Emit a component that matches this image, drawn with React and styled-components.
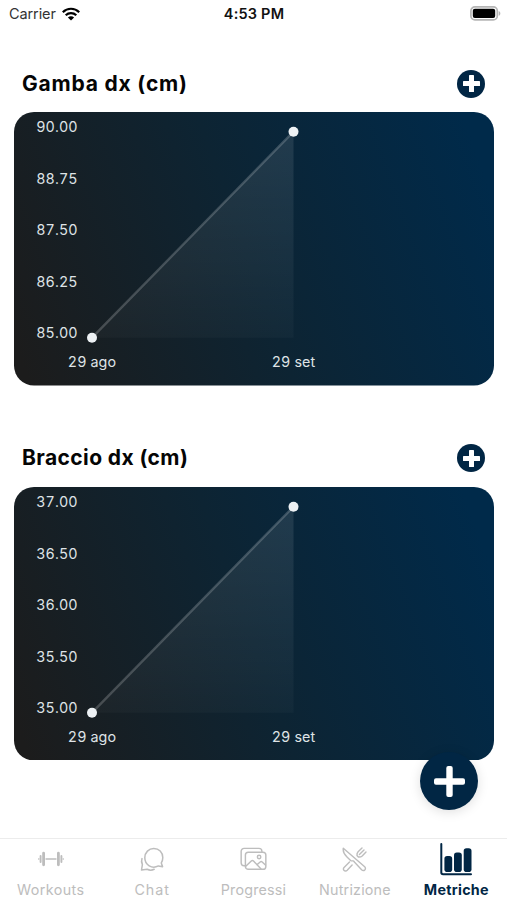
import React from 'react'
import styled, { createGlobalStyle } from 'styled-components'

const GlobalStyle = createGlobalStyle`
  * {
    box-sizing: border-box;
  }
  body {
    margin: 0;
    background-color: white;
    font-family: Inter, 'Liberation Sans', sans-serif;
  }
`
const Screen = styled.div`
  position: relative;
  width: 507px;
  height: 900px;
  overflow: hidden;
  display: flex;
  flex-direction: column;
  background-color: white;
`
const StatusBar = styled.div`
  height: 27px;
  padding: 0 6px 0 9px;
  display: grid;
  grid-template-columns: 1fr auto 1fr;
  align-items: center;
  color: #111;
`
const Carrier = styled.div`
  display: flex;
  align-items: center;
  gap: 6px;
  font-size: 14.5px;
  letter-spacing: -0.1px;
  color: #333;
`
const Time = styled.div`
  margin-right: 2px;
  font-size: 14.5px;
  font-weight: 600;
  letter-spacing: 0.2px;
`
const Battery = styled.svg`
  justify-self: end;
`
const Content = styled.main`
  flex: 1;
  padding: 28px 13px 0 14px;
`
const Section = styled.section`
  height: 374.5px;
`
const SectionHeader = styled.div`
  height: 57px;
  padding: 0 9px 0 8px;
  display: flex;
  align-items: center;
  justify-content: space-between;
`
const Title = styled.h2`
  margin: 0;
  font-size: 21px;
  font-weight: 700;
  line-height: 30px;
  letter-spacing: ${props => props.$spacing};
  color: #050505;
`
const AddButton = styled.button`
  width: 28px;
  height: 28px;
  padding: 0;
  border: none;
  border-radius: 50%;
  display: flex;
  align-items: center;
  justify-content: center;
  background-color: #012644;
  cursor: pointer;
`
const FloatingButton = styled(AddButton)`
  position: absolute;
  right: 29px;
  bottom: 90px;
  width: 58px;
  height: 58px;
  box-shadow: 0 2px 12px rgba(0, 0, 0, 0.13);
`
const Chart = styled.svg`
  display: block;
  font-size: 14.3px;
  font-variant-numeric: tabular-nums;
  letter-spacing: 0.1px;
  fill: #dfe3e6;
`
const TabBar = styled.nav`
  height: 62px;
  border-top: 1px solid #ececec;
  display: flex;
`
const Tab = styled.a`
  flex: 1;
  display: flex;
  flex-direction: column;
  align-items: center;
  color: ${props => (props.$active ? '#012644' : '#bdbdbd')};
  font-size: 14.3px;
  font-weight: ${props => (props.$active ? 700 : 400)};
  letter-spacing: ${props => props.$spacing};
  line-height: 20px;
  white-space: nowrap;
`
const TabIcon = styled.div`
  height: 41px;
  padding-bottom: 1px;
  display: flex;
  align-items: center;
  justify-content: center;
`

const Plus = ({ size, thickness, radius }) => (
  <svg width={size} height={size} fill='white'>
    <rect x={(size - thickness) / 2} width={thickness} height={size} rx={radius} />
    <rect y={(size - thickness) / 2} width={size} height={thickness} rx={radius} />
  </svg>
)

const DumbbellIcon = () => (
  <svg width='26' height='16' viewBox='0 0 26 16' fill='none' stroke='currentColor' strokeLinecap='round'>
    <path d='M8 8h10' strokeWidth='1.4' />
    <path d='M5.6 2.2v11.6M20.4 2.2v11.6' strokeWidth='2.8' />
    <path d='M2.6 4.9v6.2M23.4 4.9v6.2' strokeWidth='1.9' />
    <path d='M.8 7.5v1M25.2 7.5v1' strokeWidth='1' />
  </svg>
)

const ChatIcon = () => (
  <svg width='24' height='25' viewBox='0 0 24 25' fill='none' stroke='currentColor' strokeWidth='1.5' strokeLinecap='round' strokeLinejoin='round'>
    <path d='M22.6 19.7l-4.2-.8c-6.4 3.4-13.6-1-13.6-8.1 0-5.3 4-9.4 9-9.4 5.1 0 9 4.1 9 9.2 0 2-.5 3.8-1.5 5.3z' />
    <path d='M2 11.6c-.8 2.3-.4 4.3.4 6L1.5 23l5.6-.7c2.4 1.1 5 1 7.1 0' />
  </svg>
)

const ImagesIcon = () => (
  <svg width='27' height='24' viewBox='0 0 28 24' fill='none' stroke='currentColor' strokeWidth='1.5' strokeLinecap='round' strokeLinejoin='round'>
    <path d='M5.6 19H4.2a3 3 0 0 1-3-3V4a3 3 0 0 1 3-3h15.5a3 3 0 0 1 3 3v.7' />
    <rect x='5.6' y='4.9' width='21.2' height='17.8' rx='3' />
    <circle cx='19.8' cy='10' r='1.8' />
    <path d='M6 19.6l5.7-5.5c.7-.7 1.6-.7 2.3 0l7.6 7.9M17.6 18l3.3-2.9c.7-.6 1.4-.6 2.1 0l3.4 3.2' />
  </svg>
)

const CutleryIcon = () => (
  <svg width='25' height='25' viewBox='0 0 25 25' fill='none' stroke='currentColor' strokeWidth='1.4' strokeLinecap='round' strokeLinejoin='round'>
    <path d='M1.3 1.2C.7 4.5 2.3 7.4 5 10l3.6 3.5c.8.7 1.7.3 2.5.4.7.1.9.7 1.5 1.4l7 7.4c1 1 2.3 1.1 3.2.2.9-.8.8-2.2-.1-3.1L1.3 1.2z' />
    <path d='M7.5 15l-5.2 5.3c-.9.9-1 2.3-.2 3.1.8.8 2.2.7 3.1-.2l4.9-5.2' />
    <path d='M20 1l-3.9 3.8c-1.1 1.2-1.3 2.4-1.1 3.8M24 5l-3.8 3.9c-1.2 1.1-2.4 1.3-3.8 1.1M22 3l-4.6 4.6M15 8.6l1.4 1.4' />
  </svg>
)

const MetricsIcon = () => (
  <svg width='33' height='33' viewBox='0 0 33 33' fill='currentColor'>
    <path d='M1.3 1v28.5q0 1.8 1.8 1.8H31' fill='none' stroke='currentColor' strokeWidth='2' strokeLinecap='round' />
    <rect x='4.4' y='13' width='7.8' height='16' rx='2.8' />
    <rect x='14' y='9.6' width='7.8' height='19.4' rx='2.8' />
    <rect x='23.7' y='5.2' width='7.8' height='23.8' rx='2.8' />
  </svg>
)

const tabs = [
  { label: 'Workouts', icon: <DumbbellIcon />, spacing: '0.4px' },
  { label: 'Chat', icon: <ChatIcon />, spacing: '0.9px' },
  { label: 'Progressi', icon: <ImagesIcon />, spacing: '0.2px' },
  { label: 'Nutrizione', icon: <CutleryIcon />, spacing: '0.2px' },
  { label: 'Metriche', icon: <MetricsIcon />, spacing: '0.3px', active: true },
]

const metrics = [
  { id: 'gamba', title: 'Gamba dx (cm)', spacing: '0.8px', values: ['90.00', '88.75', '87.50', '86.25', '85.00'] },
  { id: 'braccio', title: 'Braccio dx (cm)', spacing: '0.4px', values: ['37.00', '36.50', '36.00', '35.50', '35.00'] },
]

const LineChart = ({ id, values }) => (
  <Chart width='480' height='273.5' viewBox='0 0 480 273.5'>
    <defs>
      <linearGradient id={`${id}-bg`} gradientUnits='userSpaceOnUse' x1='0' y1='230' x2='470' y2='60'>
        <stop offset='0' stopColor='#1c1c1c' />
        <stop offset='0.5' stopColor='#0d2433' />
        <stop offset='1' stopColor='#002a4a' />
      </linearGradient>
      <linearGradient id={`${id}-area`} x1='0' y1='0' x2='0' y2='1'>
        <stop offset='0' stopColor='white' stopOpacity='0.1' />
        <stop offset='1' stopColor='white' stopOpacity='0.025' />
      </linearGradient>
    </defs>
    <rect width='480' height='273.5' rx='20' fill={`url(#${id}-bg)`} />
    <path d='M78 225.7L279.5 19.7V225.7Z' fill={`url(#${id}-area)`} />
    <path d='M78 225.7L279.5 19.7' stroke='white' strokeOpacity='0.2' strokeWidth='2.4' />
    <circle cx='78' cy='225.7' r='5' fill='#edf1f4' />
    <circle cx='279.5' cy='19.7' r='5' fill='#edf1f4' />
    {values.map((value, i) => (
      <text key={value} x='63.7' y={20 + i * 51.5} textAnchor='end'>{value}</text>
    ))}
    <text x='78' y='255' textAnchor='middle'>29 ago</text>
    <text x='279.5' y='255' textAnchor='middle'>29 set</text>
  </Chart>
)

const App = () => {
  return (
    <Screen>
      <GlobalStyle />
      <StatusBar>
        <Carrier>
          Carrier
          <svg width='18' height='14' viewBox='0 0 18 14' fill='none' stroke='black' strokeWidth='2.2'>
            <path d='M.8 5.2C5.4.6 12.6.6 17.2 5.2M3.7 8.2c3-2.9 7.6-2.9 10.6 0' />
            <path d='M9 13.6L5.9 10.5c1.8-1.6 4.4-1.6 6.2 0z' fill='black' stroke='none' />
          </svg>
        </Carrier>
        <Time>4:53 PM</Time>
        <Battery width='31' height='15' viewBox='0 0 31 15'>
          <rect x='.9' y='.9' width='26.4' height='13' rx='4' fill='white' stroke='#b5b5b5' strokeWidth='1.7' />
          <rect x='2.8' y='2.8' width='22.4' height='9.2' rx='2' fill='black' />
          <path d='M28.7 5v4.8c2.2-.8 2.2-4 0-4.8z' fill='#b5b5b5' />
        </Battery>
      </StatusBar>
      <Content>
        {metrics.map(metric => (
          <Section key={metric.id}>
            <SectionHeader>
              <Title $spacing={metric.spacing}>{metric.title}</Title>
              <AddButton aria-label='add'>
                <Plus size={17} thickness={5} radius={0.6} />
              </AddButton>
            </SectionHeader>
            <LineChart id={metric.id} values={metric.values} />
          </Section>
        ))}
      </Content>
      <TabBar>
        {tabs.map(tab => (
          <Tab key={tab.label} $active={tab.active} $spacing={tab.spacing}>
            <TabIcon>{tab.icon}</TabIcon>
            {tab.label}
          </Tab>
        ))}
      </TabBar>
      <FloatingButton aria-label='new'>
        <Plus size={31} thickness={6.4} radius={2} />
      </FloatingButton>
    </Screen>
  )
}

export default App
